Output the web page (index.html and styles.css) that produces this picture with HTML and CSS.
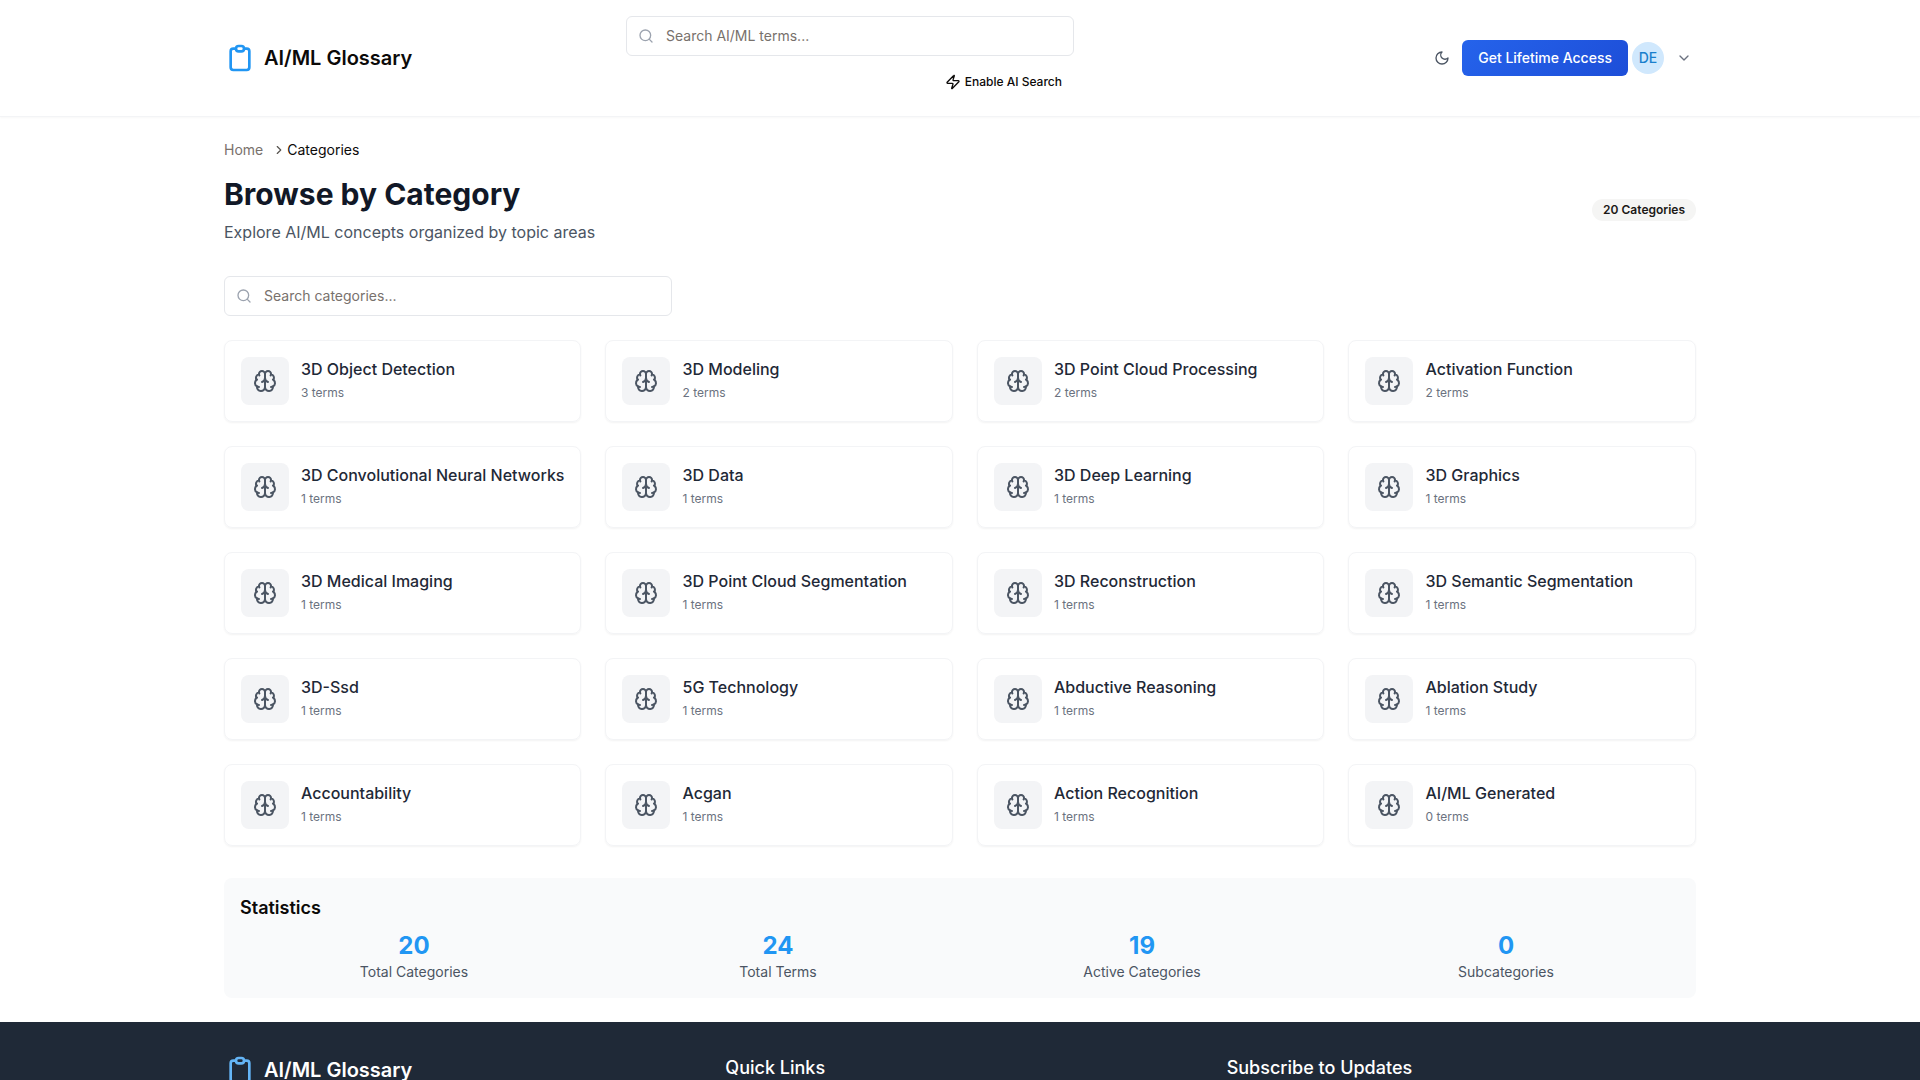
FILE: index.html
```html
<!DOCTYPE html>
<html lang="en">
<head>
<meta charset="utf-8">
<title>AI/ML Glossary</title>
<link rel="stylesheet" href="styles.css">
</head>
<body>
<svg class="sprite" aria-hidden="true">
  <symbol id="clipboard" viewBox="0 0 24 24"><path d="M9 5H7a2 2 0 00-2 2v12a2 2 0 002 2h10a2 2 0 002-2V7a2 2 0 00-2-2h-2M9 5a2 2 0 002 2h2a2 2 0 002-2M9 5a2 2 0 012-2h2a2 2 0 012 2"/></symbol>
  <symbol id="search" viewBox="0 0 24 24"><circle cx="11" cy="11" r="8"/><path d="m21 21-4.3-4.3"/></symbol>
  <symbol id="brain" viewBox="0 0 24 24"><path d="M12 5a3 3 0 1 0-5.997.125 4 4 0 0 0-2.526 5.77 4 4 0 0 0 .556 6.588A4 4 0 1 0 12 18Z"/><path d="M12 5a3 3 0 1 1 5.997.125 4 4 0 0 1 2.526 5.77 4 4 0 0 1-.556 6.588A4 4 0 1 1 12 18Z"/><path d="M15 13a4.5 4.5 0 0 1-3-4 4.5 4.5 0 0 1-3 4"/><path d="M17.599 6.5a3 3 0 0 0 .399-1.375"/><path d="M6.003 5.125A3 3 0 0 0 6.401 6.5"/><path d="M3.477 10.896a4 4 0 0 1 .585-.396"/><path d="M19.938 10.5a4 4 0 0 1 .585.396"/><path d="M6 18a4 4 0 0 1-1.967-.516"/><path d="M19.967 17.484A4 4 0 0 1 18 18"/></symbol>
</svg>

<header class="header">
  <div class="container header-row">
    <a class="logo"><svg class="icon logo-icon"><use href="#clipboard"/></svg><span>AI/ML Glossary</span></a>
    <div class="header-search">
      <div class="field"><svg class="icon field-icon"><use href="#search"/></svg><span>Search AI/ML terms...</span></div>
      <button class="ai-toggle"><svg class="icon icon-16" viewBox="0 0 24 24"><path d="M4 14a1 1 0 0 1-.78-1.63l9.9-10.2a.5.5 0 0 1 .86.46l-1.92 6.02A1 1 0 0 0 13 10h7a1 1 0 0 1 .78 1.63l-9.9 10.2a.5.5 0 0 1-.86-.46l1.92-6.02A1 1 0 0 0 11 14z"/></svg>Enable AI Search</button>
    </div>
    <div class="actions">
      <button class="theme"><svg class="icon icon-16" viewBox="0 0 24 24"><path d="M12 3a6 6 0 0 0 9 9 9 9 0 1 1-9-9Z"/></svg></button>
      <button class="cta">Get Lifetime Access</button>
      <div class="avatar">DE</div>
      <button class="menu"><svg class="icon icon-16" viewBox="0 0 24 24"><path d="m6 9 6 6 6-6"/></svg></button>
    </div>
  </div>
</header>

<main class="container main">
  <nav class="crumbs"><a>Home</a><svg class="icon crumb-icon" viewBox="0 0 24 24"><path d="m9 18 6-6-6-6"/></svg><span>Categories</span></nav>
  <div class="intro">
    <div>
      <h1>Browse by Category</h1>
      <p>Explore AI/ML concepts organized by topic areas</p>
    </div>
    <span class="badge">20 Categories</span>
  </div>
  <div class="field category-search"><svg class="icon field-icon"><use href="#search"/></svg><span>Search categories...</span></div>

  <section class="grid">
    <article class="card"><div class="tile"><svg class="icon"><use href="#brain"/></svg></div><div><h3>3D Object Detection</h3><p>3 terms</p></div></article>
    <article class="card"><div class="tile"><svg class="icon"><use href="#brain"/></svg></div><div><h3>3D Modeling</h3><p>2 terms</p></div></article>
    <article class="card"><div class="tile"><svg class="icon"><use href="#brain"/></svg></div><div><h3>3D Point Cloud Processing</h3><p>2 terms</p></div></article>
    <article class="card"><div class="tile"><svg class="icon"><use href="#brain"/></svg></div><div><h3>Activation Function</h3><p>2 terms</p></div></article>
    <article class="card"><div class="tile"><svg class="icon"><use href="#brain"/></svg></div><div><h3>3D Convolutional Neural Networks</h3><p>1 terms</p></div></article>
    <article class="card"><div class="tile"><svg class="icon"><use href="#brain"/></svg></div><div><h3>3D Data</h3><p>1 terms</p></div></article>
    <article class="card"><div class="tile"><svg class="icon"><use href="#brain"/></svg></div><div><h3>3D Deep Learning</h3><p>1 terms</p></div></article>
    <article class="card"><div class="tile"><svg class="icon"><use href="#brain"/></svg></div><div><h3>3D Graphics</h3><p>1 terms</p></div></article>
    <article class="card"><div class="tile"><svg class="icon"><use href="#brain"/></svg></div><div><h3>3D Medical Imaging</h3><p>1 terms</p></div></article>
    <article class="card"><div class="tile"><svg class="icon"><use href="#brain"/></svg></div><div><h3>3D Point Cloud Segmentation</h3><p>1 terms</p></div></article>
    <article class="card"><div class="tile"><svg class="icon"><use href="#brain"/></svg></div><div><h3>3D Reconstruction</h3><p>1 terms</p></div></article>
    <article class="card"><div class="tile"><svg class="icon"><use href="#brain"/></svg></div><div><h3>3D Semantic Segmentation</h3><p>1 terms</p></div></article>
    <article class="card"><div class="tile"><svg class="icon"><use href="#brain"/></svg></div><div><h3>3D-Ssd</h3><p>1 terms</p></div></article>
    <article class="card"><div class="tile"><svg class="icon"><use href="#brain"/></svg></div><div><h3>5G Technology</h3><p>1 terms</p></div></article>
    <article class="card"><div class="tile"><svg class="icon"><use href="#brain"/></svg></div><div><h3>Abductive Reasoning</h3><p>1 terms</p></div></article>
    <article class="card"><div class="tile"><svg class="icon"><use href="#brain"/></svg></div><div><h3>Ablation Study</h3><p>1 terms</p></div></article>
    <article class="card"><div class="tile"><svg class="icon"><use href="#brain"/></svg></div><div><h3>Accountability</h3><p>1 terms</p></div></article>
    <article class="card"><div class="tile"><svg class="icon"><use href="#brain"/></svg></div><div><h3>Acgan</h3><p>1 terms</p></div></article>
    <article class="card"><div class="tile"><svg class="icon"><use href="#brain"/></svg></div><div><h3>Action Recognition</h3><p>1 terms</p></div></article>
    <article class="card"><div class="tile"><svg class="icon"><use href="#brain"/></svg></div><div><h3>AI/ML Generated</h3><p>0 terms</p></div></article>
  </section>

  <section class="stats">
    <h2>Statistics</h2>
    <div class="stats-grid">
      <div><strong>20</strong><span>Total Categories</span></div>
      <div><strong>24</strong><span>Total Terms</span></div>
      <div><strong>19</strong><span>Active Categories</span></div>
      <div><strong>0</strong><span>Subcategories</span></div>
    </div>
  </section>
</main>

<footer class="footer">
  <div class="container footer-grid">
    <a class="logo"><svg class="icon logo-icon"><use href="#clipboard"/></svg><span>AI/ML Glossary</span></a>
    <h3>Quick Links</h3>
    <h3>Subscribe to Updates</h3>
  </div>
</footer>
</body>
</html>
```
FILE: styles.css
```css
* { box-sizing: border-box; margin: 0; padding: 0; }
html { height: 100%; overflow: hidden; }
body {
  height: 100%;
  overflow: hidden;
  display: flex;
  flex-direction: column;
  background: #fff;
  color: #0c0a09;
  font: 400 16px/24px Inter, "Liberation Sans", sans-serif;
}
button { font: inherit; color: inherit; background: none; border: 0; }
.sprite { display: none; }
.icon {
  width: 24px; height: 24px; flex: none;
  fill: none; stroke: currentColor; stroke-width: 2;
  stroke-linecap: round; stroke-linejoin: round;
}
.icon-16 { width: 16px; height: 16px; }
.container { width: 1536px; margin: 0 auto; padding: 0 32px; flex: none; }

.header { flex: none; height: 117px; border-bottom: 1px solid #f3f4f6; box-shadow: 0 1px 2px rgba(0, 0, 0, .03); }
.header-row { display: grid; grid-template-columns: 402px 448px 1fr; height: 116px; }
.logo { display: flex; align-items: center; gap: 8px; font-size: 20px; line-height: 28px; font-weight: 600; }
.logo-icon { width: 32px; height: 32px; color: #2196f3; }
.header-search { display: flex; flex-direction: column; align-items: flex-end; gap: 8px; padding-top: 16px; }
.field {
  display: flex; align-items: center; gap: 12px;
  width: 448px; height: 40px; padding: 0 12px 0 11px;
  border: 1px solid #e5e7eb; border-radius: 6px;
  font-size: 14px; line-height: 20px; color: #78716c;
}
.field-icon { width: 16px; height: 16px; color: #9ca3af; }
.ai-toggle { display: flex; align-items: center; gap: 4px; height: 36px; padding: 0 12px; font-size: 12px; font-weight: 500; }
.actions { display: flex; align-items: center; justify-content: flex-end; }
.theme { display: flex; padding: 12px; color: #4b5563; }
.cta {
  height: 36px; padding: 0 16px; border-radius: 6px;
  background: linear-gradient(135deg, #2563eb, #1d4ed8);
  color: #fff; font-size: 14px; line-height: 20px; font-weight: 500;
}
.avatar {
  display: flex; align-items: center; justify-content: center;
  width: 32px; height: 32px; margin-left: 4px; border-radius: 50%;
  background: #d0e8fd; color: #1a7fcc; font-size: 14px; font-weight: 500;
}
.menu { display: flex; padding: 12px 4px 12px 12px; color: #6b7280; }

.main { padding-top: 23px; padding-bottom: 24px; }
.crumbs { display: flex; align-items: center; margin-bottom: 16px; font-size: 14px; line-height: 20px; }
.crumbs a { color: #78716c; }
.crumb-icon { width: 14px; height: 14px; margin: 0 1px 0 9px; color: #57534e; }
.intro { display: flex; align-items: center; justify-content: space-between; margin-bottom: 32px; }
.intro h1 { font-size: 30px; line-height: 36px; font-weight: 700; color: #111827; }
.intro p { margin-top: 8px; color: #4b5563; }
.badge { height: 22px; padding: 3px 11px; border-radius: 11px; background: #f5f5f4; color: #1c1917; font-size: 12px; line-height: 16px; font-weight: 600; }
.category-search { margin-bottom: 24px; }

.grid { display: grid; grid-template-columns: repeat(4, 1fr); gap: 24px; margin-bottom: 32px; }
.card {
  display: flex; gap: 12px; height: 82px; padding: 16px;
  border: 1px solid #f3f4f6; border-radius: 8px;
  box-shadow: 0 1px 2px rgba(0, 0, 0, .05);
}
.tile { display: flex; align-items: center; justify-content: center; flex: none; width: 48px; height: 48px; border-radius: 8px; background: #f3f4f6; color: #4b5563; }
.card h3 { font-size: 16px; line-height: 24px; font-weight: 500; color: #1f2937; white-space: nowrap; }
.card p { margin-top: 4px; font-size: 12px; line-height: 16px; color: #6b7280; }

.stats { padding: 16px; border-radius: 8px; background: #f9fafb; }
.stats h2 { margin-bottom: 8px; font-size: 18px; line-height: 28px; font-weight: 600; }
.stats-grid { display: grid; grid-template-columns: repeat(4, 1fr); gap: 16px; text-align: center; }
.stats-grid strong { display: block; font-size: 24px; line-height: 32px; font-weight: 700; color: #2196f3; }
.stats-grid span { display: block; font-size: 14px; line-height: 20px; color: #4b5563; }

.footer { flex: 1; min-height: 0; overflow: hidden; padding-top: 32px; background: #1f2937; color: #fff; }
.footer-grid { display: grid; grid-template-columns: repeat(3, 1fr); gap: 32px; }
.footer .logo-icon { color: #64b5f6; }
.footer h3 { font-size: 18px; line-height: 28px; font-weight: 500; }
```
